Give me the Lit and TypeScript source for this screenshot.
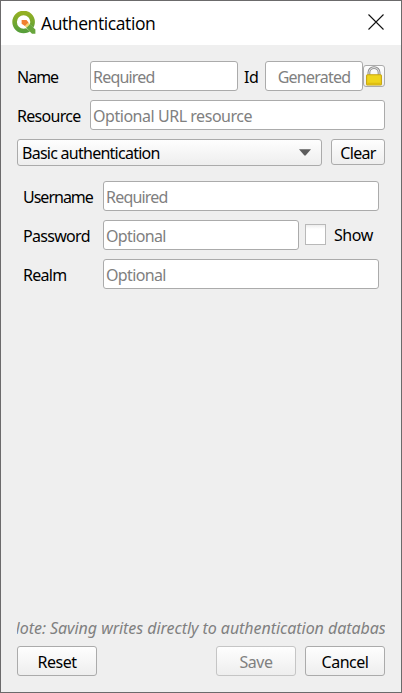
import { LitElement, html, css } from "lit";
import { customElement } from "lit/decorators.js";

const logo = html`<svg class="logo" viewBox="0 0 24 24">
  <defs>
    <linearGradient id="ring" x1="0" y1="0" x2="0" y2="1">
      <stop offset="0" stop-color="#93b023" /><stop offset="1" stop-color="#589f3a" />
    </linearGradient>
  </defs>
  <circle cx="11.6" cy="11" r="9" fill="none" stroke="url(#ring)" stroke-width="4.6" />
  <path d="M13 16.2l3.6-4 8 7.4-3.6 3.4z" fill="#fff" />
  <path d="M14 16.4l3.4-3.6 6 5.6v4.4h-3.4z" fill="#68a53c" />
  <path d="M12.8 15l3.4-3.4 1.8 1.7-3.4 3.5z" fill="#f6d873" />
  <path d="M9.6 9h4.9l2 2.4-3.6 3.6-3.3-2.2z" fill="#f18030" />
</svg>`;

const lock = html`<svg class="lock" viewBox="0 0 16 20">
  <path d="M2.9 10V6.7a5.1 5.1 0 0 1 10.2 0V10" fill="none" stroke="#858585" stroke-width="2.8" />
  <path d="M2.9 10V6.7a5.1 5.1 0 0 1 10.2 0V10" fill="none" stroke="#dcdcdc" stroke-width="1.1" />
  <rect x=".6" y="8.8" width="14.8" height="10.2" rx="1" fill="#efd51c" stroke="#c7a510" stroke-width="1.1" />
  <path d="M1.5 17.5h13" stroke="#dfbd12" stroke-width="1.5" />
</svg>`;

@customElement("app-root")
export class AppRoot extends LitElement {
  static styles = css`
    :host {
      display: flex;
      flex-direction: column;
      box-sizing: border-box;
      width: 402px;
      height: 693px;
      border: 1px solid #6b6a6b;
      background: #efefef;
      color: #000;
      font: 16px/20px "Noto Sans", sans-serif;
      letter-spacing: -0.65px;
      overflow: hidden;
    }
    * { box-sizing: border-box; }
    .titlebar {
      height: 44px;
      flex: none;
      display: flex;
      align-items: center;
      padding: 0 17px 0 11px;
      background: #fff;
    }
    .logo { width: 24px; height: 24px; margin: -1px 5px 0 0; }
    .title { flex: 1; font: 17.5px/24px "Open Sans", sans-serif; letter-spacing: -0.4px; }
    .close { width: 16px; height: 16px; margin-top: -2px; }
    .content { flex: 1; display: flex; flex-direction: column; padding: 16px; }
    .row { display: flex; align-items: center; height: 30px; margin-bottom: 9px; }
    .label { width: 73px; flex: none; padding-top: 2px; letter-spacing: -0.7px; }
    .label.tight { letter-spacing: -1px; }
    .id { width: 27px; padding: 2px 0 0 6px; flex: none; letter-spacing: -0.3px; }
    .field {
      flex: 1;
      height: 30px;
      padding: 5px 2px;
      border: 1px solid #ababab;
      border-radius: 3px;
      background: #fff;
      color: #808080;
      white-space: nowrap;
    }
    .field.required { letter-spacing: -0.8px; }
    .field.url { letter-spacing: -0.46px; }
    .name { flex: none; width: 148px; }
    .generated { flex: none; width: 98px; text-align: center; letter-spacing: -0.75px; }
    .button {
      display: flex;
      align-items: center;
      justify-content: center;
      border: 1px solid #ababab;
      border-radius: 3px;
      background: linear-gradient(#fefefe, #eee);
    }
    .lock-button { width: 22px; height: 22px; }
    .lock { width: 16px; height: 20px; }
    .combo-row { display: flex; align-items: flex-start; gap: 9px; height: 27px; }
    .combo { width: 305px; height: 27px; justify-content: space-between; padding: 0 10px 0 4px; letter-spacing: -0.74px; }
    .arrow { width: 12px; height: 7px; }
    .clear { width: 54px; height: 26px; padding-top: 2px; }
    .method { padding: 15px 6px 0; }
    .method .label { width: 80px; }
    .check { width: 21px; height: 21px; margin: -2px 8px 0 6px; border: 1px solid #b9b9b9; background: linear-gradient(#eee, #fff 4px); }
    .show { width: 45px; letter-spacing: -0.45px; }
    .note {
      display: flex;
      justify-content: center;
      margin-top: auto;
      margin-bottom: 8px;
      overflow: hidden;
      white-space: nowrap;
      font-style: italic;
      letter-spacing: -0.05px;
      color: #808080;
    }
    .actions { display: flex; gap: 9px; }
    .actions .button { width: 80px; height: 30px; padding-top: 2px; letter-spacing: -0.5px; }
    .reset { margin-right: auto; }
    .actions .disabled { color: #808080; border-color: #c5c5c5; }
  `;

  render() {
    return html`
      <div class="titlebar">
        ${logo}
        <span class="title">Authentication</span>
        <svg class="close" viewBox="0 0 16 16"><path d="M.5 .5l15 15M15.5 .5l-15 15" stroke="#111" stroke-width="1.1" /></svg>
      </div>
      <div class="content">
        <div class="row">
          <span class="label tight">Name</span>
          <div class="field name required">Required</div>
          <span class="id">Id</span>
          <div class="field generated">Generated</div>
          <div class="button lock-button">${lock}</div>
        </div>
        <div class="row">
          <span class="label">Resource</span>
          <div class="field url">Optional URL resource</div>
        </div>
        <div class="combo-row">
          <div class="button combo">
            <span>Basic authentication</span>
            <svg class="arrow" viewBox="0 0 12 7"><path d="M0 .3h12L6.6 6.6H5.4z" fill="#5c5c5c" /></svg>
          </div>
          <div class="button clear">Clear</div>
        </div>
        <div class="method">
          <div class="row">
            <span class="label tight">Username</span>
            <div class="field required">Required</div>
          </div>
          <div class="row">
            <span class="label">Password</span>
            <div class="field">Optional</div>
            <div class="check"></div>
            <span class="show">Show</span>
          </div>
          <div class="row">
            <span class="label">Realm</span>
            <div class="field">Optional</div>
          </div>
        </div>
        <div class="note"><span>Note: Saving writes directly to authentication database</span></div>
        <div class="actions">
          <div class="button reset">Reset</div>
          <div class="button disabled">Save</div>
          <div class="button">Cancel</div>
        </div>
      </div>
    `;
  }
}
